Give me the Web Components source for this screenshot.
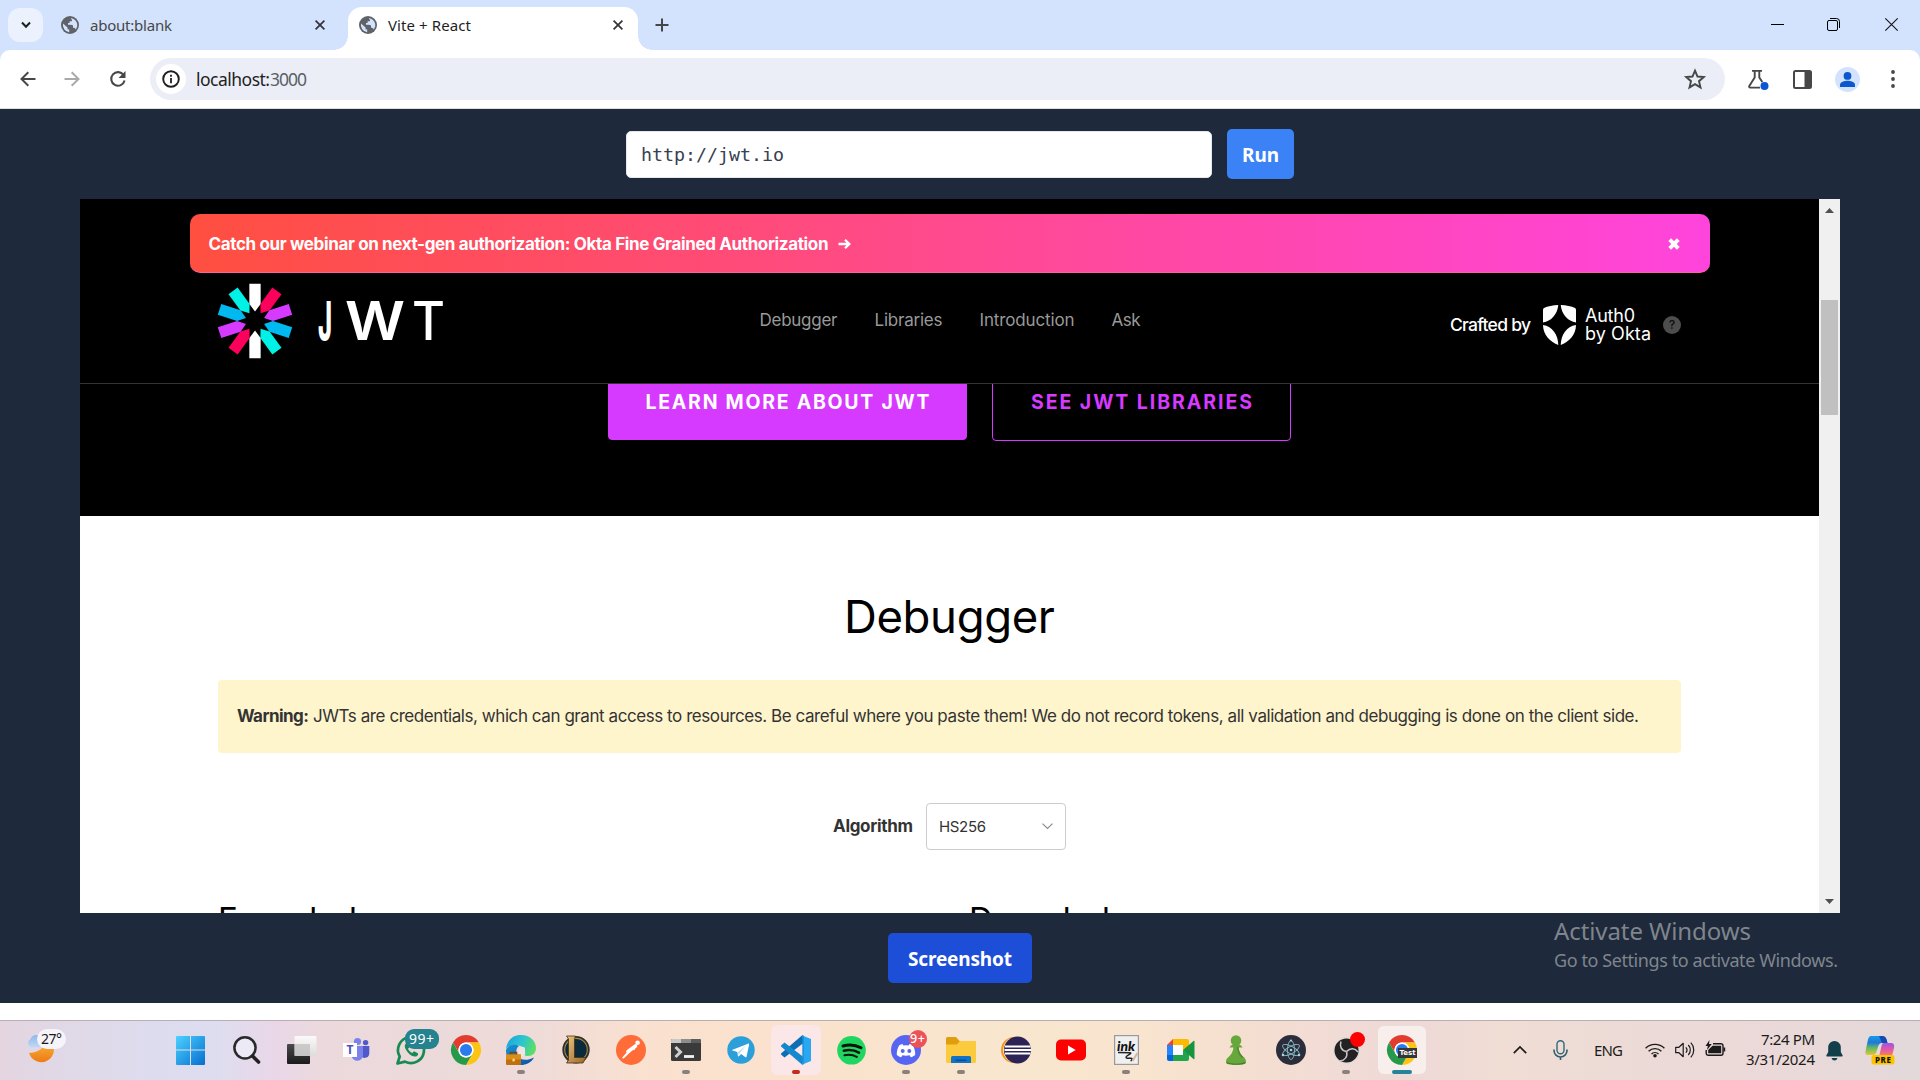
<!DOCTYPE html>
<html lang="en">
<head>
<meta charset="utf-8">
<title>Vite + React</title>
<style>
html,body{margin:0;padding:0;width:1920px;height:1080px;overflow:hidden;background:#fff;font-family:"Noto Sans","Open Sans",sans-serif}
</style>
</head>
<body>
<desktop-screen></desktop-screen>
<script>
const ICONS = {
chev:`<svg width="10" height="8" viewBox="0 0 10 8"><path d="M1 1.5 5 5.7 9 1.5" fill="none" stroke="#1f1f1f" stroke-width="2"/></svg>`,
globe:`<svg width="18" height="18" viewBox="0 0 18 18"><circle cx="9" cy="9" r="9" fill="#5f6368"/><path d="M2 7.6 L6.5 11.6 L6.6 13.2 L8.2 13.6 V16.2 A7.2 7.2 0 0 1 2 7.6Z" fill="#d3e3fd"/><path d="M9.8 2 C13 2.4 15.6 4.8 16.2 8 L16.2 10.6 L14.8 13.4 C14 11.8 13.2 11.8 12 11.7 V9.8 C12 8.8 10.6 8.9 7 8.8 V7 H8.6 V5.2 H10.8 C11.6 4 10.4 3.6 9.8 2Z" fill="#d3e3fd"/></svg>`,
close:`<svg width="10" height="10" viewBox="0 0 10 10"><path d="M.6.6l8.8 8.8M9.4.6.6 9.4" stroke="#333" stroke-width="1.7"/></svg>`,
plus:`<svg width="14" height="14" viewBox="0 0 14 14"><path d="M7 .5v13M.5 7h13" stroke="#444746" stroke-width="2"/></svg>`,
back:`<svg width="16" height="16" viewBox="0 0 16 16"><path d="M15.5 8H1.8M8.3 1.2 1.5 8l6.8 6.8" fill="none" stroke="#474747" stroke-width="2"/></svg>`,
fwd:`<svg width="16" height="16" viewBox="0 0 16 16"><path d="M.5 8h13.7M7.7 1.2 14.5 8l-6.8 6.8" fill="none" stroke="#a9a9a9" stroke-width="2"/></svg>`,
reload:`<svg width="18" height="18" viewBox="0 0 18 18"><path d="M14.6 5A6.8 6.8 0 1 0 15.6 10.6" fill="none" stroke="#474747" stroke-width="2.1"/><path d="M16.5 1v7H9.5z" fill="#474747"/></svg>`,
info:`<svg width="18" height="18" viewBox="0 0 18 18"><circle cx="9" cy="9" r="7.8" fill="none" stroke="#1f1f1f" stroke-width="1.9"/><path d="M9 8v5.2M9 4.7v2" stroke="#1f1f1f" stroke-width="1.8"/></svg>`,
star:`<svg width="22" height="22" viewBox="0 0 22 22"><path d="M11 2.6l2.5 5.9 6.3.5-4.8 4.2 1.5 6.2-5.5-3.3-5.5 3.3L7 13.200 2.200 9l6.300-.5z" fill="none" stroke="#474747" stroke-width="1.900"/></svg>`,
flask:`<svg width="24" height="24" viewBox="0 0 24 24"><path d="M6 3.900H16M8.700 4v6.500L3.300 19c-.4.8 0 1.600.8 1.600H14M13.300 4v6.500l3 4.600" fill="none" stroke="#474747" stroke-width="1.900"/><circle cx="18.500" cy="19" r="4" fill="#0b57d0"/></svg>`,
side:`<svg width="19" height="19" viewBox="0 0 19 19"><rect x="1" y="1" width="17" height="17" rx="1.500" fill="none" stroke="#474747" stroke-width="2"/><path d="M11.500 1H18v17h-6.500z" fill="#474747"/></svg>`,
user:`<svg width="25" height="25" viewBox="0 0 25 25"><circle cx="12.500" cy="12.500" r="12.500" fill="#d3e3fd"/><circle cx="12.500" cy="8.900" r="3.900" fill="#0b57d0"/><path d="M5 20v-2.200c0-3 4.500-4.100 7.500-4.100s7.500 1.100 7.500 4.100V20z" fill="#0b57d0"/></svg>`,
dots:`<svg width="4" height="18" viewBox="0 0 4 18"><g fill="#474747"><circle cx="2" cy="2" r="1.900"/><circle cx="2" cy="9" r="1.900"/><circle cx="2" cy="16" r="1.900"/></g></svg>`,
min:`<svg width="13" height="13" viewBox="0 0 13 13"><path d="M0 6.500h13" stroke="#000"/></svg>`,
restore:`<svg width="13" height="13" viewBox="0 0 13 13"><rect x=".5" y="2.500" width="10" height="10" rx="1.500" fill="none" stroke="#000"/><path d="M3 .5h6.500a3 3 0 0 1 3 3V10" fill="none" stroke="#000"/></svg>`,
wclose:`<svg width="13" height="13" viewBox="0 0 13 13"><path d="M.3.3l12.400 12.400M12.700.3.3 12.700" stroke="#111" stroke-width="1.100"/></svg>`,
arrow:`<svg width="13" height="12" viewBox="0 0 13 12"><path d="M.5 6H11M7 1.800 11.300 6 7 10.200" fill="none" stroke="#fff" stroke-width="2.300"/></svg>`,
bclose:`<svg width="12" height="12" viewBox="0 0 12 12"><path d="M1.700 1.700l8.600 8.600M10.300 1.700l-8.600 8.600" stroke="#fff" stroke-width="4"/></svg>`,
shield:`<svg width="33" height="40" viewBox="0 0 33 40"><g fill="#fff"><path d="M15.300 0C10 .1 4.500 1.300 1 3Q0 3.500 0 4.500V17.500C8 16.500 14.500 9 15.300 0Z"/><path d="M17.700 0C23 .1 28.500 1.300 32 3Q33 3.500 33 4.500V17.500C25 16.500 18.500 9 17.700 0Z"/><path d="M0 20C0 30 7.500 37 15.300 40 15 29.500 9.500 21.500 0 20Z"/><path d="M33 20C33 30 25.500 37 17.700 40 18 29.500 23.500 21.500 33 20Z"/></g></svg>`,
down:`<svg width="11" height="7" viewBox="0 0 11 7"><path d="M.5.7 5.500 5.500 10.500.7" fill="none" stroke="#888" stroke-width="1.100"/></svg>`,
sup:`<svg width="9" height="5" viewBox="0 0 9 5"><path d="M4.500 0 9 5H0z" fill="#505050"/></svg>`,
sdn:`<svg width="9" height="5" viewBox="0 0 9 5"><path d="M4.500 5 0 0h9z" fill="#505050"/></svg>`,
rays:(()=>{const c=['#fff','#fb015b','#d63aff','#00b9f1','#00f2e6','#fff','#fb015b','#d63aff','#00b9f1','#00f2e6'];
 return `<svg width="76" height="76" viewBox="-38 -38 76 76">`+c.map((f,i)=>`<path transform="rotate(${i*36})" fill="${f}" d="M-5.65 -37.300H5.65V-17L0 -9.500-5.65 -17Z"/>`).join('')+`</svg>`})(),
weather:`<svg width="30" height="30" viewBox="0 0 30 30"><defs><linearGradient id="m" x1="0" y1="0" x2="0" y2="1"><stop offset="0" stop-color="#fbc540"/><stop offset="1" stop-color="#ee7a16"/></linearGradient><linearGradient id="c" x1="0" y1="0" x2="0" y2="1"><stop offset="0" stop-color="#8fb8ea"/><stop offset="1" stop-color="#c0d8f6"/></linearGradient></defs><path d="M20 1C22 9 15.500 17.500 3 18 5 24 10 27.200 15.500 27.200 23 27.200 28 21 28 14 28 8.500 25.500 4 20 1Z" fill="url(#m)"/><path d="M4.500 12.300a4.700 4.700 0 0 1 0-8.300C6-.5 13-1.500 15 3c5 .500 5 8.300 0 9.300Z" fill="url(#c)"/></svg>`,
start:`<svg width="30" height="30" viewBox="0 0 30 30"><defs><linearGradient id="s" gradientUnits="userSpaceOnUse" x1="0" y1="0" x2="29" y2="29"><stop offset="0" stop-color="#4fd3ff"/><stop offset="1" stop-color="#0670d0"/></linearGradient></defs><path fill="url(#s)" d="M1 1h13v13.500H0V2a1 1 0 0 1 1-1ZM15 1h13a1 1 0 0 1 1 1v12.500H15ZM0 15.500h14V30H1a1 1 0 0 1-1-1ZM15 15.500h14V29a1 1 0 0 1-1 1H15Z"/></svg>`,
search:`<svg width="30" height="30" viewBox="0 0 30 30"><circle cx="14" cy="12.800" r="10.600" fill="#eceaf4" stroke="#2a2a2a" stroke-width="2.500"/><path d="M21.500 21l6 6" stroke="#222" stroke-width="3.600" stroke-linecap="round"/></svg>`,
task:`<svg width="32" height="30" viewBox="0 0 32 30"><defs><linearGradient id="k" x1="0" y1="0" x2="0" y2="1"><stop offset="0" stop-color="#4a4a4a"/><stop offset="1" stop-color="#1b1b1b"/></linearGradient><linearGradient id="k2" x1="0" y1="0" x2="0" y2="1"><stop offset="0" stop-color="#fbfafa"/><stop offset="1" stop-color="#dedcdb"/></linearGradient></defs><rect x="2" y="9" width="23" height="20" rx="1" fill="url(#k)"/><rect x="9.500" y="1" width="22" height="20" rx="1" fill="url(#k2)"/><rect x="9.500" y="9" width="15.500" height="12" fill="#b9b8b8" opacity=".65"/></svg>`,
teams:`<svg width="30" height="30" viewBox="0 0 30 30"><circle cx="16.500" cy="6.500" r="3.600" fill="#7b83eb"/><circle cx="24.600" cy="7.600" r="2.700" fill="#5059c9"/><path d="M20 11h8.300v7a4.600 4.600 0 0 1-8.300 3Z" fill="#5059c9"/><path d="M11 11h11v9a5.800 5.800 0 0 1-11.500 1Z" fill="#7b83eb"/><rect x="2" y="8" width="14" height="14" fill="#fff"/><text x="9" y="19.300" font-family="Noto Sans,sans-serif" font-weight="700" font-size="12" fill="#4b53bc" text-anchor="middle">T</text></svg>`,
whats:`<svg width="30" height="30" viewBox="0 0 30 30"><path d="M1.500 28.500 3.700 21.500A13 13 0 1 1 9 26.600Z" fill="none" stroke="#178a55" stroke-width="2.700" stroke-linejoin="round"/><path d="M10 8.500C8 10 8.500 13 11.500 17s7.500 5.500 9.500 4c1.500-1.200 1.500-2.800 0-3.300l-3-1.400-1.800 1.700c-1.500-.5-3.600-2.500-4.200-4.200l1.500-1.600-1.200-3.200c-.6-1-1.300-1.100-2.300-.5Z" fill="#178a55"/></svg>`,
chrome:`<svg width="30" height="30" viewBox="0 0 48 48"><circle cx="24" cy="24" r="23" fill="#fff"/><path d="M24 12h20.800A24 24 0 0 0 3.200 12l10.400 18A12 12 0 0 1 24 12Z" fill="#e33b2e"/><path d="M34.400 30 24 48A24 24 0 0 0 44.800 12H24a12 12 0 0 1 10.400 18Z" fill="#fdc412"/><path d="M13.600 30 3.200 12A24 24 0 0 0 24 48l10.400-18a12 12 0 0 1-20.800 0Z" fill="#26994a"/><circle cx="24" cy="24" r="12" fill="#fff"/><circle cx="24" cy="24" r="9.700" fill="#2a7ced"/></svg>`,
edge:`<svg width="30" height="30" viewBox="0 0 30 30"><defs><linearGradient id="e1" x1="0" y1=".3" x2="1" y2=".6"><stop offset="0" stop-color="#1ba6dc"/><stop offset=".5" stop-color="#2cc5d0"/><stop offset="1" stop-color="#5fe05c"/></linearGradient><linearGradient id="e2" x1="0" y1="0" x2=".8" y2="1"><stop offset="0" stop-color="#1795d8"/><stop offset="1" stop-color="#0d57a4"/></linearGradient></defs><path d="M0 14C1 5 7 0 15 0c9 0 15 6 15 13 0 5-3.500 8-8 8-2.500 0-4-1-3-3 1-3-1-6-4.500-7C9 9.500 2 10.500 0 14Z" fill="url(#e1)"/><path d="M0 15c2-5 9-6.500 13-4-3 2-3.500 6-1.500 9.500C14 25 20 26.500 28 22.500 25 28 20 30 15 30 6.500 30-.5 23.500 0 15Z" fill="url(#e2)"/><path d="M18.500 12.500c-2.500-1.500-6 .5-6 4 0 2.500 1.500 4.500 3 5.500l4-3.500c-1.200-.7-1-1.500-.7-2.500.4-1.200.3-2.600-.3-3.500Z" fill="#eee6e6"/><rect x="0" y="19.500" width="15" height="10.500" rx="1" fill="#c06f10"/><path d="M4.500 19.500v-2h6v2" fill="none" stroke="#7d4609" stroke-width="1.500"/><rect y="19.500" width="15" height="5" fill="#dc8d16"/><rect x="6.500" y="23.700" width="2.200" height="2.700" fill="#ffe27a"/></svg>`,
lol:`<svg width="30" height="30" viewBox="0 0 30 30"><defs><linearGradient id="l" x1="0" y1="0" x2="1" y2="1"><stop offset="0" stop-color="#e8c47c"/><stop offset="1" stop-color="#9a6626"/></linearGradient></defs><circle cx="15" cy="14.700" r="12.700" fill="#092b3c" stroke="#2f302d" stroke-width="2"/><circle cx="15" cy="14.700" r="11.300" fill="none" stroke="#ad8642" stroke-width="1.100"/><path d="M5.500 1H14.500L13.500 4V22.500H25L22 28H5.500L7.500 25V4Z" fill="url(#l)" stroke="#453018" stroke-width=".8"/></svg>`,
postman:`<svg width="30" height="30" viewBox="0 0 30 30"><circle cx="15" cy="15" r="15" fill="#ff6c37"/><g fill="none" stroke="#fff" stroke-linecap="round"><circle cx="21.600" cy="7.800" r="2.300" fill="#fff" stroke="none"/><path d="M19.500 11 12 16.500" stroke-width="3.600"/><path d="M12 17 7 22.800M14.500 16 7.500 22.800M18 14.500l2-4" stroke-width="1.400"/></g></svg>`,
term:`<svg width="30" height="30" viewBox="0 0 30 30"><rect y="4" width="30" height="22" rx="1.500" fill="#3a3a3a"/><path d="M0 8V5.500Q0 4 1.500 4H10v4Z" fill="#c9c9c9"/><path d="M10 4h10v4H10Z" fill="#8d8d8d"/><path d="M20 4h8.500Q30 4 30 5.500V8H20Z" fill="#5c5c5c"/><path d="M4.500 12 9.500 17 4.500 22" fill="none" stroke="#d0d0d0" stroke-width="3"/><path d="M13 21.500h10" stroke="#f2f2f2" stroke-width="2.800"/></svg>`,
tele:`<svg width="28" height="28" viewBox="0 0 28 28"><circle cx="14" cy="14" r="13.700" fill="#2a9fd9"/><path d="M5.500 13.800 21 7.700c.8-.3 1.300.2 1.100 1L19.600 20.500c-.2.9-.8 1-1.500.6l-4-3-2.200 2.100c-.5.5-.9.2-1-.4l-.6-3.800-4.700-1.400c-.9-.3-.9-.6-.1-.8Z" fill="#fff"/><path d="m11 16 8-6.500-6 7-1.300 3Z" fill="#b8dbef"/></svg>`,
vscode:`<svg width="30" height="30" viewBox="0 0 30 30"><path d="M21.500.5 30 4v22l-8.500 3.500Z" fill="#29a7f1"/><path d="M22.500 8 3.500 22.500.3 19.700a1 1 0 0 1 0-1.500L21.500 0Z" fill="#0a6fb5"/><path d="M22.500 22 3.500 7.500.3 10.300a1 1 0 0 0 0 1.500L21.500 30Z" fill="#1488cf"/><path d="M21.500 0 23 1v28l-1.500 1Z" fill="#1b93dd"/></svg>`,
spotify:`<svg width="29" height="30" viewBox="0 0 29 30"><circle cx="14.500" cy="15.300" r="14.300" fill="#1fd760"/><g fill="none" stroke="#08150c" stroke-linecap="round"><path d="M6 11c6-1.800 12.500-1.200 18 1.800" stroke-width="3"/><path d="M6.800 15.800c5.500-1.400 10.500-.8 15.200 1.800" stroke-width="2.500"/><path d="M7.500 20.200c4.500-1 8.500-.5 12.300 1.600" stroke-width="2.100"/></g></svg>`,
discord:`<svg width="30" height="30" viewBox="0 0 30 30"><circle cx="15" cy="15" r="15" fill="#5865f2"/><path d="M11.500 9 8.500 10C6.500 13 5.600 16.500 5.800 20c1.600 1.200 3 1.900 4.400 2.200l1.200-2c2.400.6 4.800.6 7.200 0l1.200 2c1.400-.3 2.800-1 4.400-2.200.2-3.500-.7-7-2.700-10l-3-1-.9 1.600a14 14 0 0 0-5.200 0Z" fill="#fff"/><circle cx="11.700" cy="16" r="2" fill="#5865f2"/><circle cx="18.300" cy="16" r="2" fill="#5865f2"/></svg>`,
folder:`<svg width="30" height="30" viewBox="0 0 30 30"><path d="M0 3.500Q0 2 1.500 2H10l3.500 4H28Q30 6 30 7.500V12H0Z" fill="#e19e0c"/><path d="M0 9.500h11l3-3.500h16v20.500Q30 28 28.500 28h-27Q0 28 0 26.500Z" fill="#fccb3d"/><path d="M5 28v-5.500Q5 21 6.500 21h17q1.500 0 1.500 1.500V28Z" fill="#1173c7"/><path d="M9.500 25.300h11" stroke="#0a4d90" stroke-width="1.500"/></svg>`,
eclipse:`<svg width="30" height="30" viewBox="0 0 30 30"><circle cx="13" cy="15" r="13" fill="#f79420"/><circle cx="14.800" cy="15" r="12.700" fill="#fde9cf"/><circle cx="16.500" cy="15" r="13.500" fill="#2c2255"/><path d="M4 11.500h25.500M3.500 15h26.500M4 18.500h25.500" stroke="#fff" stroke-width="1.900"/></svg>`,
youtube:`<svg width="30" height="22" viewBox="0 0 30 22"><rect y=".5" width="30" height="21" rx="5" fill="#f00"/><path d="M12 6.500v9l7.700-4.500z" fill="#fff"/></svg>`,
ink:`<svg width="25" height="30" viewBox="0 0 25 30"><rect x=".6" y=".6" width="23.800" height="28.800" fill="#f0f0f0" stroke="#999" stroke-width="1.200"/><text x="3" y="15.500" font-family="Lato,sans-serif" font-style="italic" font-weight="900" font-size="13.500" textLength="18" lengthAdjust="spacingAndGlyphs" fill="#111">ink</text><path d="M4 17.500l12 .3c3 .5-4 2.500-4 4.500s6 0 6 1.500-1 2-1 2.500" fill="none" stroke="#222" stroke-width="1.500"/><path d="m18.500 26 5-8" stroke="#d2b79c" stroke-width="2"/></svg>`,
meet:`<svg width="30" height="24" viewBox="0 0 30 24"><path d="M1 7 7 1v6Z" fill="#e94435"/><path d="M7 1h14q2 0 2 2v5l-6 5V7H7Z" fill="#fdba00"/><path d="M1 7h6v10H1Z" fill="#2684fc"/><path d="M1 17h6v6H3q-2 0-2-2Z" fill="#0066da"/><path d="M7 17h10v-5l6 4v5q0 2-2 2H7Z" fill="#20a44c"/><path d="m17 12 10.500-9q1-.500 1 .5v17q0 1-1 .5Z" fill="#16943f"/><path d="M7 7h10v10H7Z" fill="#fff"/></svg>`,
chess:`<svg width="22" height="30" viewBox="0 0 22 30"><g fill="#67a83c"><circle cx="11" cy="5.500" r="5.300"/><path d="M4.500 12.500Q5.500 10 8 9.500h6q2.500.5 3.500 3Z"/><path d="M8.500 12h5c.5 5.500 3 8.500 6 11 2 1.700 1.500 4.500 1 5.200C18 30.300 4 30.300 1.500 28.200 1 27.500.5 24.700 2.500 23c3-2.500 5.500-5.500 6-11Z"/></g><path d="M1.300 27q9 3.500 19.400 0l-.2 1.200C18 30.300 4 30.300 1.500 28.200Z" fill="#467e27"/><path d="M12 12h1.500c.5 5.500 3 8.500 6 11-4 0-6.500-3-7.500-11Z" fill="#4f8c2d"/></svg>`,
electron:`<svg width="30" height="30" viewBox="0 0 30 30"><circle cx="15" cy="15" r="15" fill="#2b2e3a"/><g fill="none" stroke="#8ab9c6" stroke-width=".9"><ellipse cx="15" cy="15" rx="9.500" ry="3.500" transform="rotate(-30 15 15)"/><ellipse cx="15" cy="15" rx="9.500" ry="3.500" transform="rotate(30 15 15)"/><ellipse cx="15" cy="15" rx="9.500" ry="3.500" transform="rotate(90 15 15)"/></g><g fill="#9fd4e2"><circle cx="15" cy="15" r="1.300"/><circle cx="7" cy="20" r="1.300"/><circle cx="23" cy="20" r="1.300"/><circle cx="15" cy="5.500" r="1.100"/></g></svg>`,
obs:`<svg width="27" height="27" viewBox="0 0 27 27"><circle cx="13.500" cy="13.500" r="13.200" fill="#dcdada"/><circle cx="13.500" cy="13.500" r="12" fill="#232122"/><g fill="none" stroke="#c9c7c8" stroke-width="1.500"><path d="M13.500 14.500C8 13.500 6.500 9 8 4.500"/><path d="M13.500 14.500c4-4 8.500-3.500 11.500.5"/><path d="M13.500 14.500c1.500 5-1.500 9-6.500 9.500"/></g></svg>`,
up:`<svg width="14" height="8" viewBox="0 0 14 8"><path d="M.8 7.200 7 1l6.200 6.200" fill="none" stroke="#1b1b1b" stroke-width="1.700"/></svg>`,
mic:`<svg width="15" height="20" viewBox="0 0 15 20"><rect x="4" y=".8" width="7" height="13" rx="3.500" fill="none" stroke="#2d6a78" stroke-width="1.400"/><path d="M1 9.500v1a6.500 6.500 0 0 0 13 0v-1M7.500 17v3" fill="none" stroke="#2d5f6d" stroke-width="1.600"/></svg>`,
wifi:`<svg width="20" height="16" viewBox="0 0 20 16"><g fill="none" stroke="#1b1b1b" stroke-width="1.400"><path d="M.6 6.300A13.300 13.300 0 0 1 19.400 6.300"/><path d="M3.600 9.300a9 9 0 0 1 12.800 0"/><path d="M6.500 12.100a5 5 0 0 1 7 0"/></g><circle cx="10" cy="13.800" r="1.800" fill="#1b1b1b"/></svg>`,
speaker:`<svg width="20" height="18" viewBox="0 0 20 18"><g fill="none" stroke="#1b1b1b" stroke-width="1.200" stroke-linejoin="round"><path d="M.7 6.300v5.400h3.200l4.300 4V2.300l-4.300 4Z"/><path d="M10.800 6.300a4 4 0 0 1 0 5.400M13.300 4a7.200 7.200 0 0 1 0 10M15.800 1.700a10.500 10.500 0 0 1 0 14.600"/></g></svg>`,
battery:`<svg width="21" height="17" viewBox="0 0 21 17"><path d="M8 3.700h8a2 2 0 0 1 2 2v7.600a2 2 0 0 1-2 2H3.200a2 2 0 0 1-2-2V10" fill="none" stroke="#1b1b1b" stroke-width="1.400"/><path d="M7.500 5.700h8.700v7.600H3.200V10Z" fill="#1b1b1b"/><path d="M18.500 7.500h1.700v4h-1.700Z" fill="#1b1b1b"/><path d="M4.500 0 .5 6h2.300L2 10l4.800-6H4Z" fill="#1b1b1b"/></svg>`,
bell:`<svg width="17" height="20" viewBox="0 0 17 20"><path d="M8.500 0a6.300 6.300 0 0 1 6.300 6.300V11l1.900 3.500q.2 1-.8 1H1.100q-1 0-.8-1L2.200 11V6.300A6.300 6.300 0 0 1 8.500 0ZM5.500 17h6q-.8 2.600-3 2.600t-3-2.600Z" fill="#123f4a"/></svg>`,
copilot:`<svg width="30" height="29" viewBox="0 0 30 29"><defs><linearGradient id="p1" x1="0" y1="0" x2="0" y2="1"><stop offset="0" stop-color="#149ce8"/><stop offset=".35" stop-color="#2277d8"/><stop offset=".6" stop-color="#5ab86a"/><stop offset="1" stop-color="#e6c72c"/></linearGradient><linearGradient id="p2" x1=".3" y1="0" x2=".3" y2="1"><stop offset="0" stop-color="#9a55ea"/><stop offset=".5" stop-color="#e55b9e"/><stop offset="1" stop-color="#f98a56"/></linearGradient></defs><path d="M6 0h11.500q3 0 4 3.500L22.500 7H17q-3 0-4 4l-2 6q-.7 2-3 2H3Q-.5 19 .7 14.500L3 3.500Q3.800 0 6 0Z" fill="url(#p1)"/><path d="M14 0h3.500q3 0 4 3.500L22.500 7H17Z" fill="#174ab0"/><path d="M18.500 7H26q4 0 3 5l-1.500 6q-.8 3-4 3H14l2.500-11Q17 7 18.500 7Z" fill="url(#p2)"/><rect x="6.500" y="19" width="23" height="9.500" rx="2.500" fill="#fcc400"/><text x="10" y="26.700" font-family="Noto Sans,sans-serif" font-size="8" font-weight="800" textLength="16" fill="#111">PRE</text></svg>`
};

function define(tag, html, ready) {
  const t = document.createElement('template');
  t.innerHTML = html;
  customElements.define(tag, class extends HTMLElement {
    connectedCallback() {
      if (this.shadowRoot) return;
      this.attachShadow({mode:'open'}).append(t.content.cloneNode(true));
      if (ready) ready(this, this.shadowRoot);
    }
  });
}

/* <ui-icon name> draws one entry of ICONS */
define('ui-icon', `<style>:host{display:block;flex:none;line-height:0}svg{display:block;overflow:visible}</style><div></div>`,
  (h, r) => { r.querySelector('div').innerHTML = ICONS[h.getAttribute('name')]; });

/* <ui-text w> tracks its single line of text to w pixels; mode="scale" stretches the glyphs instead */
define('ui-text', `<style>:host{display:block;flex:none;white-space:pre;line-height:1}span{display:inline-block;transform-origin:0 50%}</style><span><slot></slot></span>`,
  (h, r) => {
    const w = +h.getAttribute('w'), s = r.querySelector('span');
    if (!w) return;
    h.style.width = w + 'px';
    const nat = s.getBoundingClientRect().width, n = h.textContent.length;
    if (h.getAttribute('mode') === 'scale') s.style.transform = `scaleX(${w / nat})`;
    else s.style.letterSpacing = (w - nat) / (n - 1) + 'px';
  });

define('browser-tab', `<style>
:host{display:flex;align-items:center;box-sizing:border-box;height:43px;padding:0 0 7px 13px;font-size:15px;color:#474747}
:host([active]){background:#fff;border-radius:14px 14px 0 0;color:#1f1f1f;position:relative;padding-left:11px}
.f{display:none}:host([active]) .f{display:block;position:absolute;bottom:0;width:14px;height:14px}
.l{left:-14px;background:radial-gradient(circle at 0 0,transparent 13.500px,#fff 14px)}
.r{right:-14px;background:radial-gradient(circle at 100% 0,transparent 13.500px,#fff 14px)}
.t{margin-left:11px;flex:1}
</style><i class="f l"></i><i class="f r"></i><ui-icon name="globe"></ui-icon><div class="t"><slot></slot></div><ui-icon name="close"></ui-icon>`);

define('tab-strip', `<style>
:host{display:flex;height:50px;box-sizing:border-box;padding:7px 0 0 8px;background:#d3e3fd}
.c{display:grid;place-items:center;width:35px;height:34px;margin-top:1px;border-radius:12px;background:#ebf2fe}
.a{width:286px;box-sizing:border-box;padding-right:9px;margin-left:5px}.b{width:290px;padding-right:15px;margin-left:14px}
ui-icon.p{margin:11px 0 0 17px}
.w{display:flex;gap:45px;margin:11px 22px 0 auto;height:13px}
.w ui-icon:first-child{margin-right:-2px}
</style><div class="c"><ui-icon name="chev"></ui-icon></div>
<browser-tab class="a"><ui-text w="82">about:blank</ui-text></browser-tab>
<browser-tab class="b" active><ui-text w="83">Vite + React</ui-text></browser-tab>
<ui-icon class="p" name="plus"></ui-icon>
<div class="w"><ui-icon name="min"></ui-icon><ui-icon name="restore"></ui-icon><ui-icon name="wclose"></ui-icon></div>`);

define('tool-bar', `<style>
:host{display:block;height:59px;background:#d3e3fd}
.b{display:flex;align-items:center;height:59px;box-sizing:border-box;background:#fff;border-bottom:1px solid #dbe0dc;border-radius:10px 10px 0 0;padding:0 25px 0 20px}
.n{display:flex;gap:28px;align-items:center;width:130px}
.o{display:flex;align-items:center;width:1575px;height:42px;box-sizing:border-box;border-radius:21px;background:#ebeef7;padding:0 19px 0 6px;font-size:17.500px}
.i{display:grid;place-items:center;width:30px;height:30px;border-radius:50%;background:#fff;margin-right:10px}
.u{flex:1;display:flex;color:#1f1f1f;padding-top:2px}.u ui-text+ui-text{color:#5c5f66}
.e{display:flex;flex:1;align-items:center;padding-left:21px}
</style><div class="b"><div class="n"><ui-icon name="back"></ui-icon><ui-icon name="fwd"></ui-icon><ui-icon name="reload" style="margin-left:1px"></ui-icon></div>
<div class="o"><div class="i"><ui-icon name="info"></ui-icon></div><div class="u"><ui-text w="74">localhost:</ui-text><ui-text w="37">3000</ui-text></div><ui-icon name="star"></ui-icon></div>
<div class="e"><ui-icon name="flask"></ui-icon><ui-icon name="side" style="margin-left:23px"></ui-icon><ui-icon name="user" style="margin-left:23px"></ui-icon><ui-icon name="dots" style="margin-left:31px"></ui-icon></div></div>`);

define('app-button', `<style>:host{display:flex;align-items:center;justify-content:center;height:50px;border-radius:5px;color:#fff;font:700 19px "Noto Sans",sans-serif;background:var(--c);padding-top:3px;box-sizing:border-box}</style><slot></slot>`);

define('url-form', `<style>
:host{display:flex;justify-content:center;align-items:center;gap:15px;height:50px}
.i{display:flex;align-items:center;width:586px;height:47px;box-sizing:border-box;padding:2px 0 0 14px;border:1px solid #e5e7eb;border-radius:5px;background:#fff;color:#374151;font:18.300px "DejaVu Sans Mono",monospace}
app-button{width:67px;--c:#3b82f6}
</style><div class="i"><ui-text w="143">http://jwt.io</ui-text></div><app-button><ui-text w="37">Run</ui-text></app-button>`);

define('promo-banner', `<style>
:host{display:flex;align-items:center;box-sizing:border-box;width:1520px;height:59px;margin:0 auto;border-radius:10px;padding:2px 30px 0 19px;background:linear-gradient(90deg,#ff4f40,#ff44dd);border-bottom:1px solid #ff5fa8;color:#fff;font:700 17px Inter,sans-serif}
.a{margin:0 0 0 9px;flex:1}
</style><ui-text w="620">Catch our webinar on next-gen authorization: Okta Fine Grained Authorization</ui-text><ui-icon class="a" name="arrow"></ui-icon><ui-icon name="bclose"></ui-icon>`);

define('jwt-header', `<style>
:host{display:block;height:185px;box-sizing:border-box;padding-top:15px;background:#000;border-bottom:1px solid #333;font-family:Inter,sans-serif}
.r{display:grid;grid-template-columns:1fr auto 1fr;width:1463px;margin:0 auto;height:96px;align-items:center}
.l{display:flex;align-items:center;color:#fff;font:500 53px Inter,sans-serif;padding:0;margin-left:-1px}
.l ui-text{height:38px;line-height:38px}
.j{margin-left:25px;font-weight:800}.w{margin-left:13px;font-weight:600}.t{margin-left:7px}
nav{display:flex;gap:37px;font-size:17px;color:#999;padding-bottom:1px;margin-left:1px}
.c{display:flex;align-items:center;justify-content:flex-end;color:#fff;font-size:17.500px;font-weight:500;padding-top:7px}
.s{margin:0 9px 0 12px}
.k{display:flex;flex-direction:column;font-weight:400;font-size:18px;width:66px;margin-right:12px;padding-top:1px}.k ui-text{line-height:18px}
.q{display:grid;place-items:center;width:18px;height:18px;border-radius:50%;background:#4d4d4d;color:#111;font-size:12px;font-weight:600}
</style><promo-banner></promo-banner>
<div class="r"><div class="l"><ui-icon name="rays"></ui-icon><ui-text class="j" mode="scale" w="14">J</ui-text><ui-text class="w" mode="scale" w="60">W</ui-text><ui-text class="t" mode="scale" w="33">T</ui-text></div>
<nav><ui-text w="78">Debugger</ui-text><ui-text w="68">Libraries</ui-text><ui-text w="95">Introduction</ui-text><ui-text w="29">Ask</ui-text></nav>
<div class="c"><ui-text w="81">Crafted by</ui-text><ui-icon class="s" name="shield"></ui-icon><div class="k"><ui-text w="50">Auth0</ui-text><ui-text w="66">by Okta</ui-text></div><div class="q">?</div></div></div>`);

define('hero-actions', `<style>
:host{display:flex;justify-content:center;gap:25px;height:132px;background:#000;overflow:hidden;font:700 19.500px Inter,sans-serif}
div{display:flex;align-items:center;justify-content:center;box-sizing:border-box;height:77px;margin-top:-20px;border-radius:4px;border:1px solid #d63aff;color:#d63aff}
.a{width:359px;height:76px;padding-top:1px;background:#d63aff;color:#fff}.b{width:299px}
</style><div class="a"><ui-text w="284">LEARN MORE ABOUT JWT</ui-text></div><div class="b"><ui-text w="221">SEE JWT LIBRARIES</ui-text></div>`);

define('warning-note', `<style>
:host{display:flex;align-items:center;gap:4px;box-sizing:border-box;width:1463px;height:73px;margin:0 auto;padding-left:19px;border-radius:4px;background:#fff5cc;color:#333;font:17px Inter,sans-serif}
b{font-weight:700}
</style><b><ui-text w="72">Warning:</ui-text></b><ui-text w="1326">JWTs are credentials, which can grant access to resources. Be careful where you paste them! We do not record tokens, all validation and debugging is done on the client side.</ui-text>`);

define('algorithm-picker', `<style>
:host{display:flex;justify-content:center;align-items:center;gap:13px;height:47px;font:700 17px Inter,sans-serif;color:#333}
.s{display:flex;align-items:center;justify-content:space-between;box-sizing:border-box;width:140px;height:47px;border:1px solid #ccc;border-radius:4px;padding:0 12px;font-weight:400;font-size:15px}
</style><ui-text w="80">Algorithm</ui-text><div class="s"><ui-text w="47">HS256</ui-text><ui-icon name="down"></ui-icon></div>`);

define('debugger-page', `<style>
:host{display:block;height:397px;background:#fff;color:#000;overflow:hidden}
h1{display:flex;justify-content:center;margin:0;padding-top:76px;height:88px;font:400 45.500px/50px Inter,sans-serif}
h1 ui-text{line-height:50px}
algorithm-picker{margin-top:50px}
.h{display:grid;grid-template-columns:751px 1fr;width:1463px;margin:49px auto 0;font:400 33px/40px Inter,sans-serif}
.h ui-text{line-height:40px}
</style><h1><ui-text w="211">Debugger</ui-text></h1><warning-note></warning-note><algorithm-picker></algorithm-picker>
<div class="h"><ui-text w="139">Encoded</ui-text><ui-text w="141">Decoded</ui-text></div>`);

define('scroll-track', `<style>
:host{display:flex;flex-direction:column;align-items:center;box-sizing:border-box;width:21px;height:714px;background:#f0f0f0;padding:9px 0}
.t{width:17px;height:115px;background:#c0c0c0;margin:87px 0 auto}
</style><ui-icon name="sup"></ui-icon><div class="t"></div><ui-icon name="sdn"></ui-icon>`);

define('preview-frame', `<style>
:host{display:flex;width:1760px;height:714px;margin:20px auto;overflow:hidden}
.p{flex:1}
</style><div class="p"><jwt-header></jwt-header><hero-actions></hero-actions><debugger-page></debugger-page></div><scroll-track></scroll-track>`);

define('runner-app', `<style>
:host{display:block;height:894px;box-sizing:border-box;padding-top:20px;background:#1e293b;position:relative}
.s{width:144px;margin:0 auto;--c:#1d4ed8}
.w{position:absolute;left:1554px;top:810px;color:#7f858d;font-size:24px}
.w ui-text+ui-text{font-size:18px;margin-top:8px}
</style><url-form></url-form><preview-frame></preview-frame><app-button class="s"><ui-text w="104">Screenshot</ui-text></app-button>
<div class="w"><ui-text w="197">Activate Windows</ui-text><ui-text w="284">Go to Settings to activate Windows.</ui-text></div>`);

define('task-item', `<style>
:host{display:grid;place-items:center;position:relative;width:55px;height:59px;flex:none}
.h{display:none;position:absolute;inset:4px 2.500px 5px;border-radius:6px;background:#fbe6e8}
:host([hot]) .h{display:block}
:host([hot=now]) .h{background:#f8efec;inset:5px 3.500px 6px;box-shadow:0 0 0 1px #eaddd9}
.r{display:none;position:absolute;bottom:6px;left:23.500px;width:8px;height:4px;border-radius:2px;background:#8b817c}
:host([run]) .r{display:block}:host([run=red]) .r{background:#c42b1c}:host([run=wide]) .r{width:20px;left:17.500px;background:#25849a}
ui-icon{position:relative;margin-bottom:1px}
::slotted(*){position:absolute}
</style><i class="h"></i><ui-icon></ui-icon><i class="r"></i><slot></slot>`,
 (h, r) => { const i = r.querySelector('ui-icon'), n = document.createElement('ui-icon'); n.setAttribute('name', h.getAttribute('icon')); i.replaceWith(n); });

define('system-tray', `<style>
:host{display:flex;align-items:center;height:57px;margin-left:auto;color:#1b1b1b;font-size:15px;padding-right:25px}
.t{display:flex;flex-direction:column;align-items:flex-end;width:68px;gap:5px;margin-left:21px}
</style><ui-icon name="up"></ui-icon><ui-icon name="mic" style="margin-left:26px"></ui-icon><ui-text w="29" style="margin:2px 0 0 26px">ENG</ui-text>
<ui-icon name="wifi" style="margin-left:22px"></ui-icon><ui-icon name="speaker" style="margin-left:10px"></ui-icon><ui-icon name="battery" style="margin:-2px 0 0 10px"></ui-icon>
<div class="t"><ui-text w="54">7:24 PM</ui-text><ui-text w="69">3/31/2024</ui-text></div>
<ui-icon name="bell" style="margin:2px 0 0 11px"></ui-icon><ui-icon name="copilot" style="margin:2px 0 0 22px"></ui-icon>`);

define('task-bar', `<style>
:host{display:flex;height:60px;box-sizing:border-box;border-top:1px solid #b9afb2;
background:linear-gradient(90deg,#e4d5e0 0,#e0d8e6 60px,#dddcee 150px,#deddef 220px,#e9d7e8 275px,#ebd9dd 320px,#ecdada 440px,#efdbd8 540px,#fae1cf 650px,#fae3cd 850px,#f8e6ce 1000px,#f9e5cf 1120px,#f5dfd0 1240px,#f1dbd5 1330px,#eed9d7 1420px,#f0ddd4 1500px,#ecdad7 1640px,#ead9d9 1800px,#e2d8da 1920px)}
.we{position:relative;padding:14px 0 0 26px;flex:none;box-sizing:border-box;width:163.500px}
.p{position:absolute;left:37px;top:8px;width:29px;height:20px;border-radius:10px;background:#f7f4f9;color:#1b1b1b;font-size:14px;display:grid;place-items:center}
.n{left:21px;top:8px;width:34px;height:20px;border-radius:9px;background:#25828f;color:#fff;font-size:14px;display:grid;place-items:center}
.d{left:30px;top:9px;width:18px;height:18px;border-radius:50%;background:#ec5358;color:#fff;font-size:12.500px;font-weight:500;display:grid;place-items:center}
.o{left:31.500px;top:10.500px;width:15px;height:15px;border-radius:50%;background:#f00}
.x{left:23.500px;top:27px;width:19px;height:10px;background:#35363a;color:#fff;font:700 7px/10px "DejaVu Sans",sans-serif;display:flex;justify-content:center}
.x ui-text{line-height:10px}
.z{margin-left:1px}
</style><div class="we"><ui-icon name="weather"></ui-icon><div class="p"><ui-text w="21">27°</ui-text></div></div>
<task-item icon="start"></task-item><task-item icon="search"></task-item><task-item icon="task"></task-item><task-item icon="teams"></task-item>
<task-item icon="whats"><div class="n"><ui-text w="25">99+</ui-text></div></task-item><task-item icon="chrome"></task-item><task-item icon="edge" run></task-item>
<task-item icon="lol"></task-item><task-item icon="postman"></task-item><task-item icon="term" run></task-item><task-item icon="tele"></task-item>
<task-item icon="vscode" hot run="red"></task-item><task-item icon="spotify"></task-item><task-item icon="discord" run><div class="d"><ui-text w="15">9+</ui-text></div></task-item>
<task-item icon="folder" run></task-item><task-item icon="eclipse"></task-item><task-item icon="youtube"></task-item><task-item icon="ink" run></task-item>
<task-item icon="meet"></task-item><task-item icon="chess"></task-item><task-item icon="electron"></task-item><task-item icon="obs" run><div class="o"></div></task-item>
<task-item class="z" icon="chrome" hot="now" run="wide"><div class="x"><ui-text w="16">Test</ui-text></div></task-item><system-tray></system-tray>`);

define('desktop-screen', `<style>
:host{display:flex;flex-direction:column;width:1920px;height:1080px;background:#fff}
task-bar{margin-top:auto}
</style><tab-strip></tab-strip><tool-bar></tool-bar><runner-app></runner-app><task-bar></task-bar>`);
</script>
</body>
</html>
